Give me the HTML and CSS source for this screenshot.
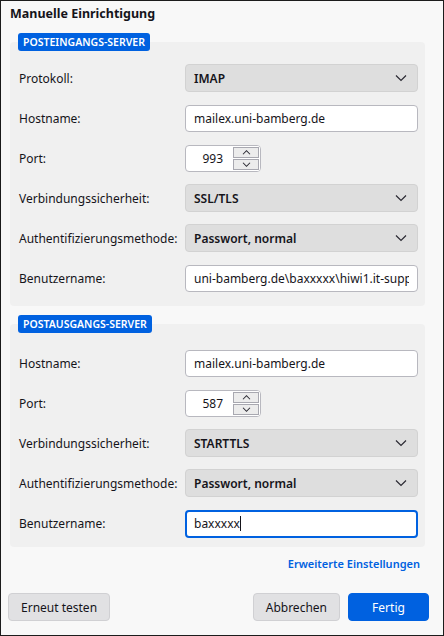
FILE: index.html
```html
<!DOCTYPE html>
<html lang="de">
<head>
<meta charset="utf-8">
<link rel="stylesheet" href="styles.css">
</head>
<body>
<div class="window">
  <h1 class="title">Manuelle Einrichtigung</h1>

  <section class="group">
    <div class="badge">POSTEINGANGS-SERVER</div>
    <div class="panel panel-in">
      <div class="row"><span class="label">Protokoll:</span>
        <div class="select"><span>IMAP</span><svg class="chev" viewBox="0 0 12 8"><path d="M1 1.5 6 6.5 11 1.5"/></svg></div></div>
      <div class="row"><span class="label">Hostname:</span>
        <div class="input">mailex.uni-bamberg.de</div></div>
      <div class="row"><span class="label">Port:</span>
        <div class="port"><span class="num">993</span><span class="spin"><span class="sb"><svg viewBox="0 0 12 8"><path d="M2 6 6 2 10 6"/></svg></span><span class="sb"><svg viewBox="0 0 12 8"><path d="M2 2 6 6 10 2"/></svg></span></span></div></div>
      <div class="row"><span class="label">Verbindungssicherheit:</span>
        <div class="select"><span>SSL/TLS</span><svg class="chev" viewBox="0 0 12 8"><path d="M1 1.5 6 6.5 11 1.5"/></svg></div></div>
      <div class="row"><span class="label">Authentifizierungsmethode:</span>
        <div class="select"><span>Passwort, normal</span><svg class="chev" viewBox="0 0 12 8"><path d="M1 1.5 6 6.5 11 1.5"/></svg></div></div>
      <div class="row"><span class="label">Benutzername:</span>
        <div class="input clip"><span class="clipped">uni-bamberg.de\baxxxxx\hiwi1.it-supp</span></div></div>
    </div>
  </section>

  <section class="group group2">
    <div class="badge">POSTAUSGANGS-SERVER</div>
    <div class="panel panel-out">
      <div class="row"><span class="label">Hostname:</span>
        <div class="input">mailex.uni-bamberg.de</div></div>
      <div class="row"><span class="label">Port:</span>
        <div class="port"><span class="num">587</span><span class="spin"><span class="sb"><svg viewBox="0 0 12 8"><path d="M2 6 6 2 10 6"/></svg></span><span class="sb"><svg viewBox="0 0 12 8"><path d="M2 2 6 6 10 2"/></svg></span></span></div></div>
      <div class="row"><span class="label">Verbindungssicherheit:</span>
        <div class="select"><span>STARTTLS</span><svg class="chev" viewBox="0 0 12 8"><path d="M1 1.5 6 6.5 11 1.5"/></svg></div></div>
      <div class="row"><span class="label">Authentifizierungsmethode:</span>
        <div class="select"><span>Passwort, normal</span><svg class="chev" viewBox="0 0 12 8"><path d="M1 1.5 6 6.5 11 1.5"/></svg></div></div>
      <div class="row"><span class="label">Benutzername:</span>
        <div class="input focus">baxxxxx<span class="caret"></span></div></div>
    </div>
  </section>

  <div class="linkrow"><a class="link">Erweiterte Einstellungen</a></div>

  <div class="buttons">
    <button class="btn">Erneut testen</button>
    <div class="right">
      <button class="btn">Abbrechen</button>
      <button class="btn primary">Fertig</button>
    </div>
  </div>
</div>
</body>
</html>
```
FILE: styles.css
```css
* { box-sizing: border-box; }
html, body { margin: 0; padding: 0; }
body {
  font-family: "Noto Sans", "Open Sans", sans-serif;
  font-size: 12px;
  color: #15141a;
  background: #f8f8f8;
}
.window {
  width: 444px;
  height: 636px;
  border: 1px solid #1c1c1c;
  background: #f8f8f8;
  display: flex;
  flex-direction: column;
}
.title {
  margin: 3px 0 0 9px;
  font-size: 12.5px;
  font-weight: 700;
  line-height: 20px;
  height: 20px;
}
.group {
  display: flex;
  flex-direction: column;
  margin: 9px 18px 0 9px;
}
.group2 { margin-top: 9px; }
.badge {
  align-self: flex-start;
  margin-left: 8px;
  height: 18px;
  line-height: 18px;
  padding: 0 5px;
  background: #0061e0;
  color: #fff;
  font-size: 10.5px;
  font-weight: 600;
  border-radius: 3px;
  position: relative;
  z-index: 1;
}
.panel {
  margin-top: -9px;
  background: #f0f0f0;
  border-radius: 4px;
  padding: 22px 7px 14px 9px;
  display: flex;
  flex-direction: column;
  gap: 12px;
}
.panel-out { padding-top: 25px; padding-bottom: 10px; }
.row {
  display: flex;
  align-items: center;
  height: 28px;
}
.label {
  width: 166px;
  flex: none;
  white-space: nowrap;
}
.select {
  flex: 1;
  height: 28px;
  background: #dedede;
  border: 1px solid #d2d2d2;
  border-radius: 4px;
  display: flex;
  align-items: center;
  justify-content: space-between;
  padding: 0 10px 0 8px;
  font-weight: 600;
}
.chev { width: 12px; height: 8px; }
.chev path, .sb path {
  fill: none;
  stroke: #2b2a33;
  stroke-width: 1.2;
}
.input {
  flex: 1;
  min-width: 0;
  height: 27px;
  background: #fff;
  border: 1px solid #b8b8bf;
  border-radius: 4px;
  display: flex;
  align-items: center;
  padding: 0 8px;
  white-space: nowrap;
  overflow: hidden;
}
.clipped { overflow: hidden; white-space: nowrap; }
.input.focus {
  border: 2px solid #0061e0;
  padding: 0 7px;
  height: 28px;
  margin-top: 1px;
}
.caret {
  display: inline-block;
  width: 1px;
  height: 15px;
  background: #15141a;
}
.port {
  width: 76px;
  height: 27px;
  display: flex;
  background: #fff;
  border: 1px solid #b8b8bf;
  border-radius: 4px;
  overflow: hidden;
}
.num {
  width: 47px;
  display: flex;
  align-items: center;
  justify-content: flex-end;
  padding-right: 10px;
}
.spin {
  flex: 1;
  display: flex;
  flex-direction: column;
  gap: 1px;
  padding: 1px 1px 1px 0;
  background: #fff;
}
.sb {
  flex: 1;
  background: #ececec;
  border: 1px solid #a8a8b0;
  display: flex;
  align-items: center;
  justify-content: center;
}
.sb svg { width: 11px; height: 7px; }
.linkrow {
  display: flex;
  justify-content: flex-end;
  margin: 9px 23px 0 0;
}
.link {
  color: #0061e0;
  font-size: 11px;
  font-weight: 600;
  line-height: 16px;
}
.buttons {
  display: flex;
  justify-content: space-between;
  margin: 21px 14px 0 7px;
}
.right { display: flex; gap: 8px; }
.btn {
  font-family: inherit;
  font-size: 12px;
  color: #15141a;
  height: 28px;
  padding: 0 12px;
  background: #e1e1e3;
  border: 1px solid #d0d0d3;
  border-radius: 4px;
}
.primary {
  background: #0061e0;
  border-color: #0061e0;
  color: #fff;
  width: 81px;
}
```
